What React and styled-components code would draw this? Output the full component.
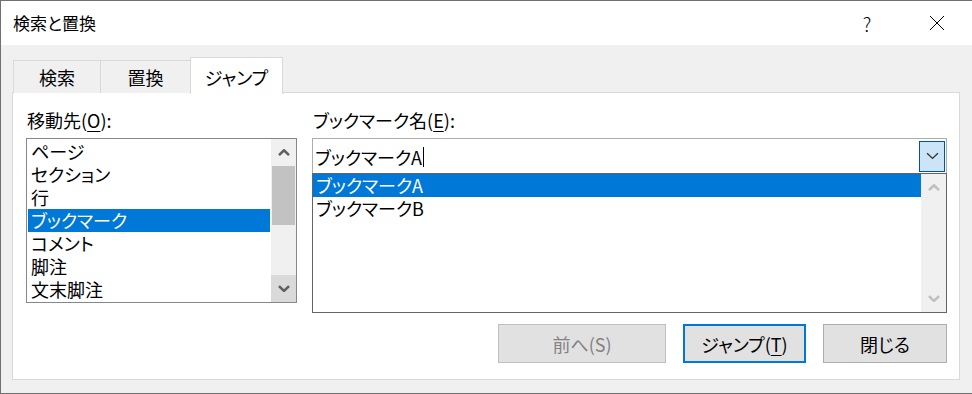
import styled, { createGlobalStyle } from "styled-components"

const GlobalStyle = createGlobalStyle`
    html, body {
        margin: 0;
        padding: 0;
        background: #f0f0f0;
    }
    * {
        box-sizing: border-box;
    }
`

const Window = styled.div`
    width: 972px;
    height: 394px;
    display: flex;
    flex-direction: column;
    border-top: 1px solid #707070;
    border-left: 1px solid #707070;
    border-bottom: 1px solid #707070;
    font-family: "Noto Sans CJK JP", "Noto Sans", sans-serif;
    font-feature-settings: "palt";
    color: #000;
    overflow: hidden;
`

const TitleBar = styled.div`
    height: 44px;
    flex-shrink: 0;
    background: #fff;
    display: flex;
    align-items: center;
    padding-left: 12px;
`

const Title = styled.div`
    flex: 1;
    font-size: 17px;
    line-height: 24px;
`

const CaptionButton = styled.div`
    width: 70px;
    height: 44px;
    display: flex;
    align-items: center;
    justify-content: center;
    font-size: 19px;
    font-weight: 300;
    color: #000;
`

const Body = styled.div`
    flex: 1;
    background: #f0f0f0;
    padding: 12px 12px 13px 11px;
    display: flex;
    flex-direction: column;
`

const TabRow = styled.div`
    display: flex;
    align-items: flex-end;
    height: 36px;
    margin-left: 1px;
    margin-bottom: -1px;
    position: relative;
    z-index: 1;
`

const Tab = styled.div`
    height: ${p => (p.$active ? "37px" : "33px")};
    width: ${p => p.$w}px;
    margin-left: ${p => (p.$first ? "0" : "-1px")};
    margin-bottom: ${p => (p.$active ? "-1px" : "0")};
    background: ${p => (p.$active ? "#fff" : "#f0f0f0")};
    border: 1px solid #d9d9d9;
    border-bottom: none;
    display: flex;
    justify-content: center;
    padding-top: ${p => (p.$active ? "6px" : "3px")};
    font-size: 18px;
    line-height: 26px;
`

const Panel = styled.div`
    flex: 1;
    background: #fff;
    border: 1px solid #d9d9d9;
    padding: 15px 12px 16px 13px;
    display: flex;
    flex-direction: column;
`

const Columns = styled.div`
    display: flex;
    gap: 15px;
`

const LeftCol = styled.div`
    width: 271px;
    display: flex;
    flex-direction: column;
`

const RightCol = styled.div`
    flex: 1;
    display: flex;
    flex-direction: column;
`

const Label = styled.div`
    font-size: 18px;
    line-height: 24px;
    height: 24px;
    margin-bottom: 6px;
    padding-left: 1px;
    u {
        text-decoration-thickness: 1px;
        text-underline-offset: 3px;
    }
`

const ListBox = styled.div`
    height: 165px;
    border: 1px solid #828790;
    display: flex;
`

const Items = styled.div`
    flex: 1;
    padding: 1px 1px 0 1px;
`

const Item = styled.div`
    height: 23px;
    line-height: 23px;
    font-size: 18px;
    padding-left: 3px;
    white-space: nowrap;
    background: ${p => (p.$selected ? "#0078d7" : "transparent")};
    color: ${p => (p.$selected ? "#fff" : "#000")};
`

const ScrollBar = styled.div`
    width: 25px;
    display: flex;
    flex-direction: column;
    background: #f0f0f0;
`

const ScrollButton = styled.div`
    height: 27px;
    flex-shrink: 0;
    display: flex;
    align-items: center;
    justify-content: center;
    background: ${p => p.$bg || "#f0f0f0"};
`

const Thumb = styled.div`
    height: 59px;
    background: #c2c2c2;
    margin: 0 1px;
`

const Track = styled.div`
    flex: 1;
`

const Combo = styled.div`
    height: 35px;
    border: 1px solid #adadad;
    border-bottom: none;
    background: #fff;
    display: flex;
    align-items: center;
    padding: 1px 1px 0 2px;
`

const ComboText = styled.div`
    flex: 1;
    font-size: 18px;
    line-height: 24px;
    display: flex;
    align-items: center;
`

const Caret = styled.span`
    display: inline-block;
    width: 1px;
    height: 20px;
    background: #000;
    margin-left: 1px;
`

const DropButton = styled.div`
    width: 26px;
    height: 31px;
    margin-top: -1px;
    background: #cce4f7;
    border: 1px solid #005499;
    display: flex;
    align-items: center;
    justify-content: center;
`

const DropList = styled.div`
    height: 140px;
    border: 1px solid #646464;
    display: flex;
`

const DropItems = styled.div`
    flex: 1;
    padding-left: 0;
`

const ButtonRow = styled.div`
    display: flex;
    justify-content: flex-end;
    gap: 17px;
    margin-top: 11px;
`

const Button = styled.div`
    width: ${p => p.$w}px;
    height: 39px;
    background: #e1e1e1;
    border: ${p => (p.$default ? "2px solid #0078d7" : p.$disabled ? "1px solid #bfbfbf" : "1px solid #adadad")};
    color: ${p => (p.$disabled ? "#838383" : "#000")};
    display: flex;
    align-items: center;
    justify-content: center;
    font-size: 18px;
    u {
        text-decoration-thickness: 1px;
        text-underline-offset: 3px;
    }
`

function Chevron({ up, color = "#606060", width = 2.6, size = 12 }) {
    return (
        <svg width={size} height={size * 0.6} viewBox="0 0 12 7">
            <path
                d={up ? "M1 6 L6 1.2 L11 6" : "M1 1 L6 5.8 L11 1"}
                fill="none"
                stroke={color}
                strokeWidth={width}
            />
        </svg>
    )
}

const places = ["ページ", "セクション", "行", "ブックマーク", "コメント", "脚注", "文末脚注"]
const marks = ["ブックマークA", "ブックマークB"]

export default function App() {
    return (
        <Window>
            <GlobalStyle />
            <TitleBar>
                <Title>検索と置換</Title>
                <CaptionButton>?</CaptionButton>
                <CaptionButton>
                    <svg width="16" height="16" viewBox="0 0 16 16">
                        <path d="M1 1 L15 15 M15 1 L1 15" stroke="#000" strokeWidth="1" fill="none" />
                    </svg>
                </CaptionButton>
            </TitleBar>
            <Body>
                <TabRow>
                    <Tab $w={88} $first>検索</Tab>
                    <Tab $w={91}>置換</Tab>
                    <Tab $w={93} $active>ジャンプ</Tab>
                </TabRow>
                <Panel>
                    <Columns>
                        <LeftCol>
                            <Label>移動先(<u>O</u>):</Label>
                            <ListBox>
                                <Items>
                                    {places.map(p => (
                                        <Item key={p} $selected={p === "ブックマーク"}>{p}</Item>
                                    ))}
                                </Items>
                                <ScrollBar>
                                    <ScrollButton><Chevron up /></ScrollButton>
                                    <Thumb />
                                    <Track />
                                    <ScrollButton $bg="#dadada"><Chevron /></ScrollButton>
                                </ScrollBar>
                            </ListBox>
                        </LeftCol>
                        <RightCol>
                            <Label>ブックマーク名(<u>E</u>):</Label>
                            <Combo>
                                <ComboText>ブックマークA<Caret /></ComboText>
                                <DropButton>
                                    <Chevron color="#333" width={1.3} size={13} />
                                </DropButton>
                            </Combo>
                            <DropList>
                                <DropItems>
                                    {marks.map(m => (
                                        <Item key={m} $selected={m === "ブックマークA"}>{m}</Item>
                                    ))}
                                </DropItems>
                                <ScrollBar>
                                    <ScrollButton><Chevron up color="#c0c0c0" /></ScrollButton>
                                    <Track />
                                    <ScrollButton><Chevron color="#c0c0c0" /></ScrollButton>
                                </ScrollBar>
                            </DropList>
                            <ButtonRow>
                                <Button $w={168} $disabled>前へ(S)</Button>
                                <Button $w={123} $default>ジャンプ(<u>T</u>)</Button>
                                <Button $w={124}>閉じる</Button>
                            </ButtonRow>
                        </RightCol>
                    </Columns>
                </Panel>
            </Body>
        </Window>
    )
}
